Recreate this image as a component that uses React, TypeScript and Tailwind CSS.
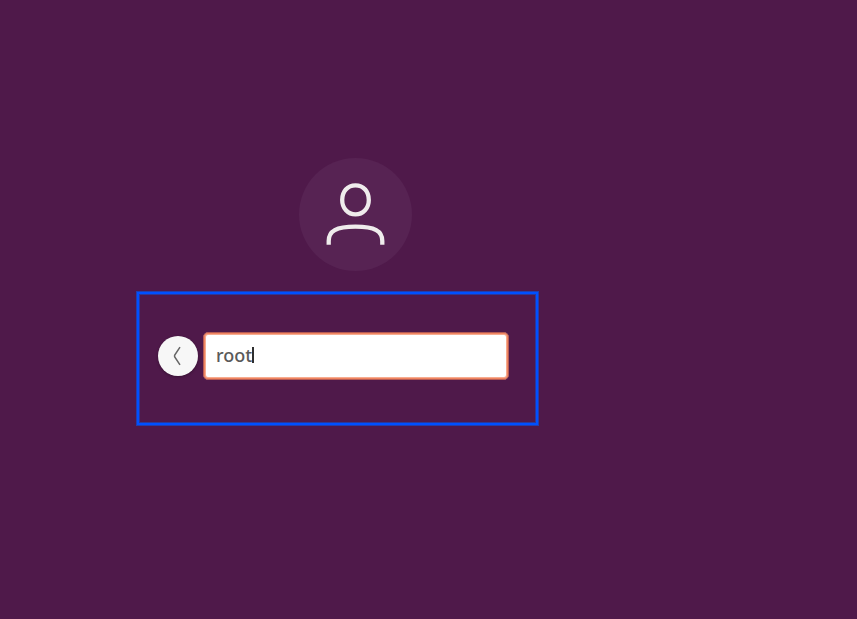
function Avatar() {
  return (
    <div className="ml-[299px] flex h-[113px] w-[113px] items-center justify-center rounded-full bg-[#572353]">
      <svg className="h-[113px] w-[113px]" viewBox="0 0 113 113" fill="none" stroke="#efecec" strokeWidth="4.3">
        <path d="M56.5 27.3C64.6 27.3 69.8 33.6 69.8 41.9C69.8 50.2 64.2 56.4 56.5 56.4C48.8 56.4 43.2 50.2 43.2 41.9C43.2 33.6 48.4 27.3 56.5 27.3Z" />
        <path d="M29.7 86.8V83C29.7 73 37 68.6 56.5 68.6C76 68.6 83.3 73 83.3 83V86.8" />
      </svg>
    </div>
  );
}

function BackButton() {
  return (
    <button
      aria-label="Back"
      className="flex h-10 w-10 shrink-0 items-center justify-center rounded-full bg-[#f7f7f7] shadow-[0_1px_3px_rgba(0,0,0,0.3)]"
    >
      <svg className="h-10 w-10" viewBox="0 0 40 40" fill="none" stroke="#666666" strokeWidth="1.5">
        <path d="M22 11.2L16.6 19.3V20.7L22 28.8" />
      </svg>
    </button>
  );
}

function UsernameField() {
  return (
    <div className="flex h-12 w-[306px] items-center rounded-[5px] border border-[#b65b54] bg-white pb-[3px] pl-3 shadow-[inset_0_0_0_1px_#f08560,inset_0_0_0_2px_#f6ab90]">
      <span className="font-['Noto_Sans',sans-serif] text-[18px] leading-[24px] font-medium text-[#5a5a5a]">root</span>
      <span className="h-4 w-[2px] bg-[#2f2f2f]" />
    </div>
  );
}

export default function App() {
  return (
    <main className="h-[619px] w-[857px] overflow-hidden bg-[#4f194a] pt-[158px]">
      <Avatar />
      <section className="mt-5 ml-[136px] flex h-[135px] w-[403px] items-center gap-[5.5px] border border-[#203eae] pb-[5px] pl-[20.5px] shadow-[inset_0_0_0_2px_#0050ff,inset_0_0_0_3px_#2a389a]">
        <BackButton />
        <UsernameField />
      </section>
    </main>
  );
}
